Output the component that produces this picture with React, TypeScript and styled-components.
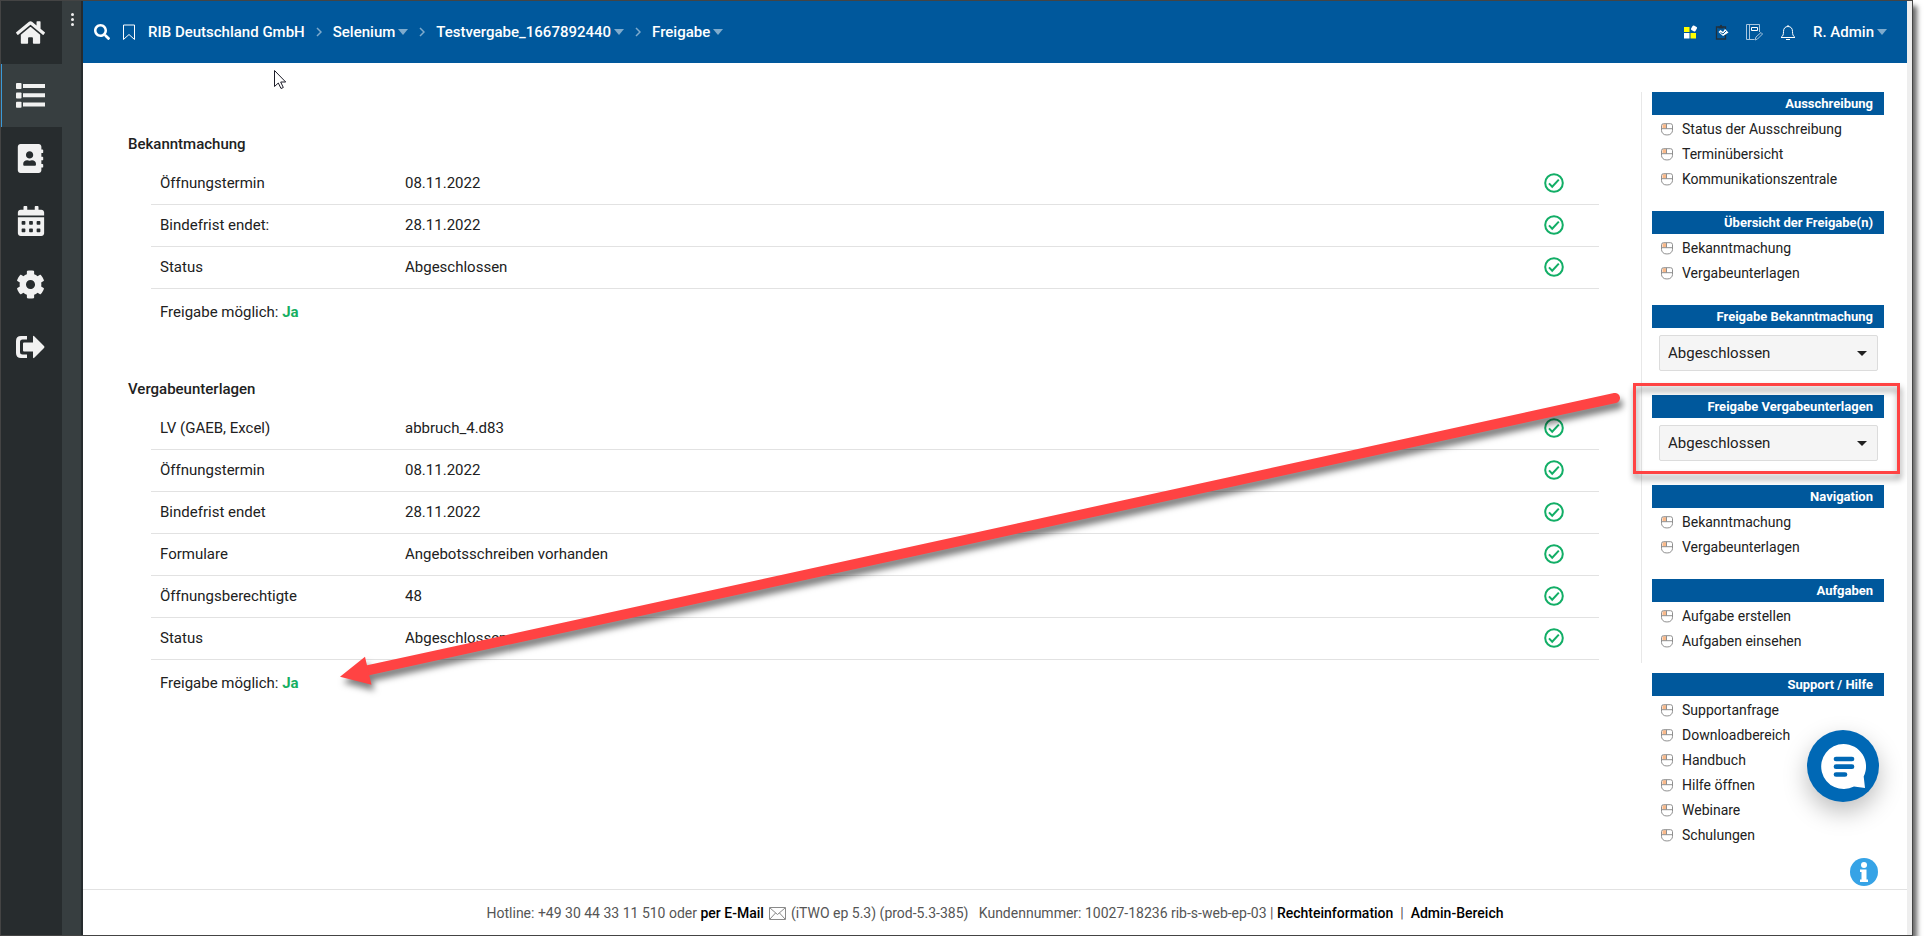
import React from "react";
import styled, { createGlobalStyle, css } from "styled-components";
import {
  FaHome,
  FaAddressBook,
  FaCalendarAlt,
  FaCog,
  FaSearch,
} from "react-icons/fa";

const GlobalStyle = createGlobalStyle`
  *, *::before, *::after { box-sizing: border-box; }
  body {
    margin: 0;
    background: #fff;
    color: #212121;
    font-family: Roboto, "Liberation Sans", sans-serif;
    font-size: 15px;
  }
  a { color: inherit; text-decoration: none; }
  button, select { font: inherit; color: inherit; }
  svg { display: block; }
`;

const Frame = styled.div`
  position: relative;
  display: flex;
  min-height: calc(100vh - 15px);
  margin-right: 15px;
  border: 1px solid #444;
  background: #fff;
  box-shadow: 5px 5px 5px -1px rgba(0, 0, 0, 0.6);
`;

const MainNav = styled.nav`
  width: 61px;
  flex: none;
  background: #272c2e;
`;

const NavLink = styled.a<{ $active?: boolean }>`
  display: flex;
  align-items: center;
  justify-content: center;
  height: 63px;
  padding: 0 2px 1px 0;
  color: #f1f1f1;
  ${(p) =>
    p.$active &&
    css`
      background: #373e40;
      box-shadow: inset 1px 0 #3a9ad9;
    `}
`;

const NavRail = styled.div`
  width: 21px;
  flex: none;
  padding-top: 11px;
  background: #373e40;
  border-right: 2px solid #262b2e;
`;

const RailButton = styled.button`
  display: flex;
  flex-direction: column;
  align-items: center;
  gap: 2px;
  width: 100%;
  padding: 1px 0 0 2px;
  border: 0;
  background: none;
  i {
    width: 3px;
    height: 3px;
    border-radius: 50%;
    background: #f1f1f1;
  }
`;

const Page = styled.div`
  flex: 1;
  min-width: 0;
  display: flex;
  flex-direction: column;
  border-right: 5px solid #eee;
`;

const TopBar = styled.header`
  display: flex;
  align-items: center;
  justify-content: space-between;
  height: 62px;
  padding: 0 20px 0 11px;
  background: #00589c;
  color: #fff;
  font-weight: 500;
`;

const BarGroup = styled.div<{ $gap: number }>`
  display: flex;
  align-items: center;
  gap: ${(p) => p.$gap}px;
`;

const IconButton = styled.button`
  display: flex;
  padding: 0;
  border: 0;
  background: none;
  color: #fff;
`;

const MenuButton = styled.button`
  display: flex;
  align-items: center;
  gap: 3px;
  padding: 0;
  border: 0;
  background: none;
  color: #fff;
`;

const Caret = styled.span<{ $color: string; $height: number }>`
  border: 5px solid transparent;
  border-top: ${(p) => p.$height}px solid ${(p) => p.$color};
  border-bottom: 0;
`;

const Body = styled.div`
  flex: 1;
  display: flex;
  padding-top: 29px;
`;

const Content = styled.main`
  flex: 1;
  min-width: 0;
  padding: 40px 42px 0 45px;
`;

const Section = styled.section`
  height: 245px;
  h2 {
    margin: 0 0 7px;
    font-size: 15px;
    font-weight: 500;
    line-height: 24px;
  }
`;

const Checks = styled.table`
  width: calc(100% - 23px);
  margin-left: 23px;
  border-collapse: separate;
  border-spacing: 0;
  table-layout: fixed;
  th, td {
    height: 42px;
    padding: 0 0 1px 9px;
    border-bottom: 1px solid #e2e2e2;
    text-align: left;
    font-weight: 400;
  }
  th { width: 254px; }
  td:first-of-type { padding-left: 0; }
  td:last-child { width: 91px; padding-left: 0; }
  td svg { margin: 0 auto; }
`;

const Result = styled.p`
  margin: 0 0 0 32px;
  padding-top: 11px;
  line-height: 24px;
  b { color: #16ae62; font-weight: 700; }
`;

const Side = styled.aside`
  width: 266px;
  flex: none;
  font-size: 14px;
`;

const SideTop = styled.div`
  padding: 0 23px 10px 10px;
  border-left: 1px solid #e8e8e8;
`;

const SideBottom = styled.div`
  padding: 10px 23px 0 11px;
`;

const Group = styled.section`
  position: relative;
  & + & { margin-top: 20px; }
  h3 {
    margin: 0;
    padding-right: 11px;
    background: #00589c;
    color: #fff;
    font-size: 13px;
    font-weight: 700;
    line-height: 23px;
    text-align: right;
  }
`;

const LinkList = styled.ul`
  margin: 1px 0 0;
  padding: 0 0 0 9px;
  list-style: none;
  a {
    display: flex;
    align-items: center;
    gap: 9px;
    height: 25px;
  }
  svg { margin-top: 1px; }
`;

const SelectBox = styled.div`
  position: relative;
  margin: 7px 6px 24px 7px;
  select {
    display: block;
    width: 100%;
    height: 36px;
    padding: 0 8px;
    border: 1px solid #dcdcdc;
    border-radius: 2px;
    background: #f5f5f5;
    font-size: 15px;
    appearance: none;
  }
  span {
    position: absolute;
    top: 16px;
    right: 11px;
    pointer-events: none;
  }
`;

const Highlight = styled.div`
  position: absolute;
  inset: -12px -16px -13px -19px;
  border: 3px solid #ff4343;
  filter: drop-shadow(1px 5px 3px rgba(0, 0, 0, 0.45));
  pointer-events: none;
`;

const Footer = styled.footer`
  display: flex;
  align-items: center;
  justify-content: center;
  height: 46px;
  border-top: 1px solid #e2e2e2;
  color: #555;
  font-size: 14px;
  white-space: pre;
  a { color: #000; font-weight: 500; }
  svg { margin: 2px 5px 0; }
`;

const Arrow = styled.svg`
  position: absolute;
  top: 379px;
  left: 328px;
  filter: drop-shadow(3px 6px 3px rgba(0, 0, 0, 0.5));
  pointer-events: none;
`;

const Pointer = styled.svg`
  position: absolute;
  top: 69px;
  left: 273px;
  pointer-events: none;
`;

const ChatButton = styled.button`
  position: absolute;
  right: 33px;
  bottom: 133px;
  padding: 0;
  border: 0;
  border-radius: 50%;
  background: #0068b5;
  box-shadow: 0 10px 24px rgba(0, 0, 0, 0.26);
`;

const InfoButton = styled.button`
  position: absolute;
  right: 34px;
  bottom: 49px;
  padding: 0;
  border: 0;
  border-radius: 50%;
  background: #36a3e6;
`;

const CheckIcon = () => (
  <svg width="20" height="20" viewBox="0 0 20 20" fill="none" stroke="#12ae66" strokeWidth="2" aria-label="ok">
    <circle cx="10" cy="10" r="8.8" />
    <path d="M5 10.4l3.2 3.3 6.6-7.1" />
  </svg>
);

const MouseIcon = () => (
  <svg width="12" height="13" viewBox="0 0 12 13" fill="none" stroke="#8f8f8f">
    <path d="M1.5 1.2h4v4.3h-4z" fill="#f9b98a" stroke="none" />
    <path d="M2.5 .7h7a2 2 0 0 1 2 2v4.6a4.6 4.6 0 0 1-4.6 4.6H5.1A4.6 4.6 0 0 1 .5 7.3V2.7a2 2 0 0 1 2-2zM.5 5.7h11M5.5.7v5" />
  </svg>
);

const ListIcon = () => (
  <svg width="29" height="25" viewBox="0 0 29 25" fill="#f1f1f1">
    <rect x="0" y="0" width="5.500" height="6" rx=".8" />
    <rect x="0" y="9.500" width="5.500" height="6" rx=".8" />
    <rect x="0" y="18.700" width="5.500" height="6" rx=".8" />
    <path d="M7 1h22v4H7zM7 10.300h22v4H7zM7 19.500h22v4H7z" />
  </svg>
);

const LogoutIcon = () => (
  <svg width="29" height="24" viewBox="0 0 29 24" fill="#f1f1f1">
    <path d="M11 1v3.500H6.500Q4 4.500 4 7v10q0 2.500 2.500 2.500H11V23H5Q0 23 0 18V6Q0 1 5 1z" />
    <path d="M8 7.500h9V2q0-2 1.500-.5l9.500 9.500q1 1 0 2l-9.500 9.500Q17 24 17 22v-5.500H8q-1 0-1-1v-7q0-1 1-1z" />
  </svg>
);

const BookmarkIcon = () => (
  <svg width="14" height="17" viewBox="0 0 14 17" fill="none" stroke="#fff">
    <path d="M1.500 1h11v14.500L7 10.500l-5.500 5z" />
  </svg>
);

const Chevron = () => (
  <svg width="6" height="10" viewBox="0 0 6 10" fill="none" stroke="#7fabcd" strokeWidth="1.500">
    <path d="M1 1l4 4-4 4" />
  </svg>
);

const TilesIcon = () => (
  <svg width="14" height="14" viewBox="0 0 14 14">
    <path d="M0 2h5.500v5H0zM6.500 8H12v5.500H6.500z" fill="#ff0" />
    <path d="M0 8h5.500v5.500H0z" fill="#fff" />
    <rect x="7.500" y="1" width="5" height="5" rx="1" transform="rotate(30 10 3.500)" fill="#fff" />
  </svg>
);

const ClipboardIcon = () => (
  <svg width="14" height="16" viewBox="0 0 14 16" fill="none">
    <path d="M4.500 3H1.500v12h9v-4M10.500 5V3H8" stroke="#22303c" strokeWidth="1.300" />
    <path d="M3.500 4.500V2.200h1.300Q6 -.5 7.300 2.200h1.200v2.300z" fill="#22303c" />
    <path d="M3.500 8l2-2 2.500 2 2-3 3.500 3.500L8 12z" fill="#fff" />
    <path d="M5.500 8.500L8 10l3-3" stroke="#00589c" />
  </svg>
);

const NotebookIcon = () => (
  <svg width="17" height="17" viewBox="0 0 17 17" fill="none" stroke="#a9c6de">
    <path d="M13.500 8V.5H.5v15h8M3.500.5v15" />
    <path d="M5.500 3.500h6v3h-6z" stroke="#fff" />
    <path d="M9 16l1-3 5-4.500 1.500 1.500-5 5z" />
  </svg>
);

const BellIcon = () => (
  <svg width="16" height="17" viewBox="0 0 16 17" fill="none" stroke="#fff">
    <path d="M1 13.500c2-1.500 2.500-3 2.500-6 0-3 1.500-5 4.500-5s4.500 2 4.500 5c0 3 .5 4.500 2.500 6zM8 2.500V1M6 15.500h4" />
  </svg>
);

const MailIcon = () => (
  <svg width="17" height="13" viewBox="0 0 17 13" fill="none" stroke="#8a8a8a">
    <path d="M.5.5h16v12H.5zM1 1l7.500 6.500L16 1M1 12l5.500-6M16 12l-5.500-6" />
  </svg>
);

const navItems = [
  { label: "Startseite", icon: <FaHome size={29} /> },
  { label: "Projekte", icon: <ListIcon />, active: true },
  { label: "Adressbuch", icon: <FaAddressBook size={29} /> },
  { label: "Kalender", icon: <FaCalendarAlt size={30} /> },
  { label: "Einstellungen", icon: <FaCog size={29} /> },
  { label: "Abmelden", icon: <LogoutIcon /> },
];

const notice = [
  ["Öffnungstermin", "08.11.2022"],
  ["Bindefrist endet:", "28.11.2022"],
  ["Status", "Abgeschlossen"],
];

const documents = [
  ["LV (GAEB, Excel)", "abbruch_4.d83"],
  ["Öffnungstermin", "08.11.2022"],
  ["Bindefrist endet", "28.11.2022"],
  ["Formulare", "Angebotsschreiben vorhanden"],
  ["Öffnungsberechtigte", "48"],
  ["Status", "Abgeschlossen"],
];

function CheckSection({ title, rows }: { title: string; rows: string[][] }) {
  return (
    <Section>
      <h2>{title}</h2>
      <Checks>
        <tbody>
          {rows.map(([label, value]) => (
            <tr key={label}>
              <th scope="row">{label}</th>
              <td>{value}</td>
              <td><CheckIcon /></td>
            </tr>
          ))}
        </tbody>
      </Checks>
      <Result>Freigabe möglich: <b>Ja</b></Result>
    </Section>
  );
}

function LinkGroup({ title, links }: { title: string; links: string[] }) {
  return (
    <Group>
      <h3>{title}</h3>
      <LinkList>
        {links.map((l) => (
          <li key={l}><a href="#"><MouseIcon />{l}</a></li>
        ))}
      </LinkList>
    </Group>
  );
}

function SelectGroup({ title, marked }: { title: string; marked?: boolean }) {
  return (
    <Group>
      <h3>{title}</h3>
      <SelectBox>
        <select aria-label={title}>
          <option>Abgeschlossen</option>
        </select>
        <Caret $color="#212121" $height={5} />
      </SelectBox>
      {marked && <Highlight />}
    </Group>
  );
}

function Crumb({ children }: { children: string }) {
  return (
    <>
      <Chevron />
      <MenuButton>{children}<Caret $color="#7fabcd" $height={6} /></MenuButton>
    </>
  );
}

export default function App() {
  return (
    <>
      <GlobalStyle />
      <Frame>
        <MainNav aria-label="Hauptmenü">
          {navItems.map((n) => (
            <NavLink key={n.label} href="#" aria-label={n.label} $active={n.active}>{n.icon}</NavLink>
          ))}
        </MainNav>
        <NavRail>
          <RailButton aria-label="Menü"><i /><i /><i /></RailButton>
        </NavRail>
        <Page>
          <TopBar>
            <BarGroup $gap={12}>
              <IconButton aria-label="Suche"><FaSearch size={16} /></IconButton>
              <IconButton aria-label="Lesezeichen"><BookmarkIcon /></IconButton>
              <BarGroup as="nav" $gap={11}>
                <a href="#">RIB Deutschland GmbH</a>
                <Crumb>Selenium</Crumb>
                <Crumb>Testvergabe_1667892440</Crumb>
                <Crumb>Freigabe</Crumb>
              </BarGroup>
            </BarGroup>
            <BarGroup $gap={17}>
              <IconButton aria-label="Kacheln"><TilesIcon /></IconButton>
              <IconButton aria-label="Aufgaben"><ClipboardIcon /></IconButton>
              <IconButton aria-label="Notizen"><NotebookIcon /></IconButton>
              <IconButton aria-label="Benachrichtigungen"><BellIcon /></IconButton>
              <MenuButton>R. Admin<Caret $color="#7fabcd" $height={6} /></MenuButton>
            </BarGroup>
          </TopBar>
          <Body>
            <Content>
              <CheckSection title="Bekanntmachung" rows={notice} />
              <CheckSection title="Vergabeunterlagen" rows={documents} />
            </Content>
            <Side>
              <SideTop>
                <LinkGroup title="Ausschreibung" links={["Status der Ausschreibung", "Terminübersicht", "Kommunikationszentrale"]} />
                <LinkGroup title="Übersicht der Freigabe(n)" links={["Bekanntmachung", "Vergabeunterlagen"]} />
                <SelectGroup title="Freigabe Bekanntmachung" />
                <SelectGroup title="Freigabe Vergabeunterlagen" marked />
                <LinkGroup title="Navigation" links={["Bekanntmachung", "Vergabeunterlagen"]} />
                <LinkGroup title="Aufgaben" links={["Aufgabe erstellen", "Aufgaben einsehen"]} />
              </SideTop>
              <SideBottom>
                <LinkGroup
                  title="Support / Hilfe"
                  links={["Supportanfrage", "Downloadbereich", "Handbuch", "Hilfe öffnen", "Webinare", "Schulungen"]}
                />
              </SideBottom>
            </Side>
          </Body>
          <Footer>
            <span>Hotline: +49 30 44 33 11 510 oder </span>
            <a href="#">per E-Mail</a>
            <MailIcon />
            <span>{"(iTWO ep 5.3) (prod-5.3-385)   Kundennummer: 10027-18236 rib-s-web-ep-03 | "}</span>
            <a href="#">Rechteinformation</a>
            <span>{"  |  "}</span>
            <a href="#">Admin-Bereich</a>
          </Footer>
        </Page>
        <Arrow width="1310" height="320" viewBox="330 380 1310 320" fill="#ff4343">
          <path d="M1616 398L368 670.500" stroke="#ff4343" strokeWidth="10" strokeLinecap="round" />
          <path d="M341 676.700L366 656.700L372.500 684.700z" />
        </Arrow>
        <Pointer width="14" height="21" viewBox="0 0 14 21" fill="#fff" stroke="#1c1c28">
          <path d="M.5.5v16l3.800-3.500 2.700 5.500 2.300-1-2.600-5.500h5z" />
        </Pointer>
        <ChatButton aria-label="Chat">
          <svg width="72" height="72" viewBox="0 0 72 72">
            <path d="M36.500 14a22.500 22.500 0 0 1 20.200 32.500L58 58l-11-1.500A22.500 22.500 0 1 1 36.500 14z" fill="#fff" />
            <path d="M29 29h16M29 36.700h16M29 44.500h9" stroke="#0068b5" strokeWidth="4.700" strokeLinecap="round" />
          </svg>
        </ChatButton>
        <InfoButton aria-label="Info">
          <svg width="28" height="28" viewBox="0 0 28 28" fill="#fff">
            <circle cx="14" cy="7" r="3" />
            <path d="M10 11.500h6.500V21.500H18V24h-8v-2.500h1.500V14H10z" />
          </svg>
        </InfoButton>
      </Frame>
    </>
  );
}
